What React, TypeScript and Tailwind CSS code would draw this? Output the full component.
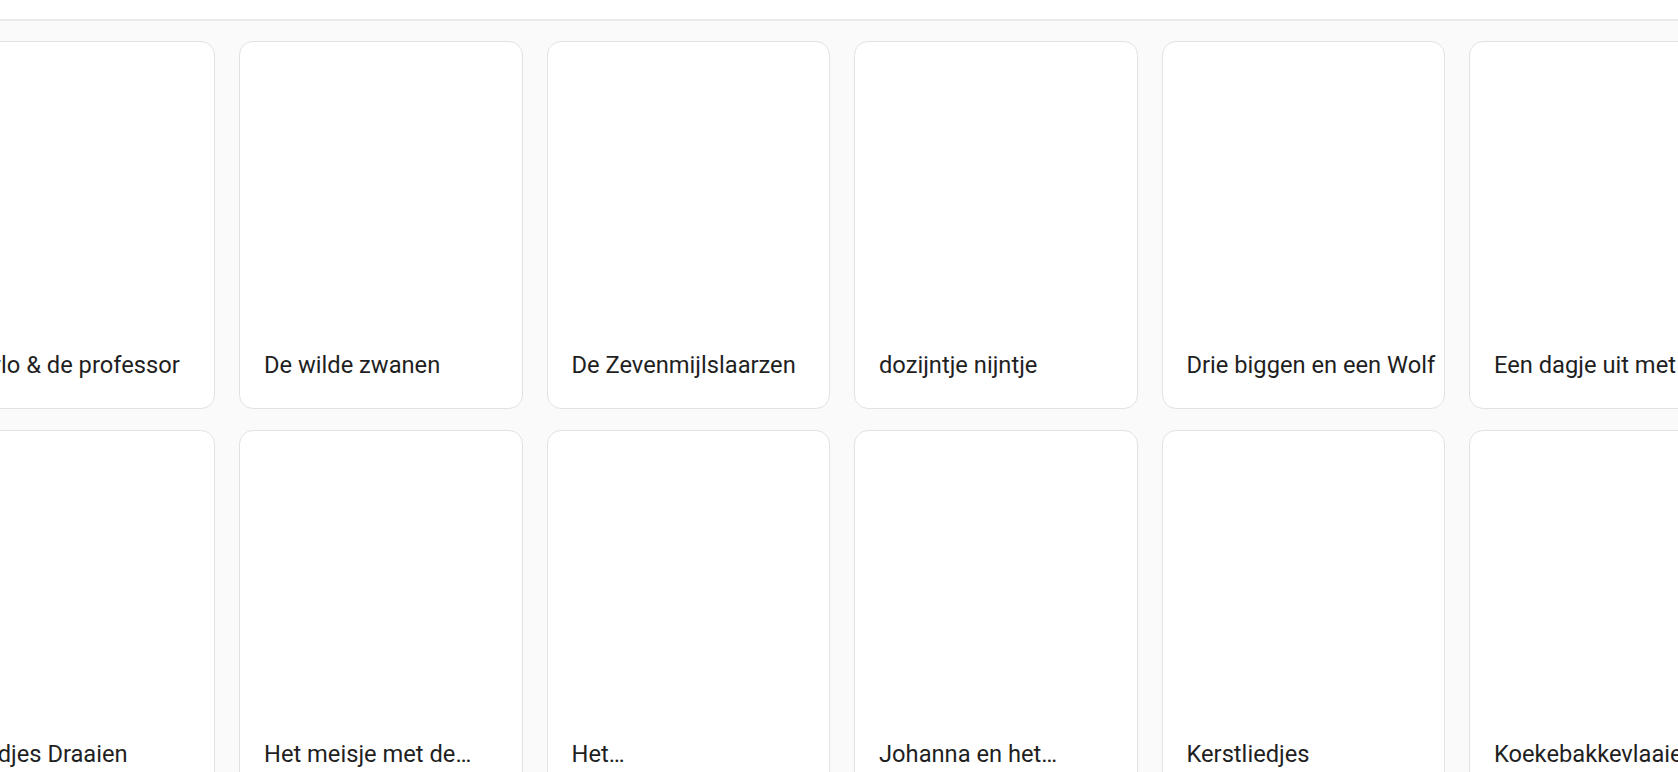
import React from "react";

const rows: string[][] = [
  ["Waylo & de professor", "De wilde zwanen", "De Zevenmijlslaarzen", "dozijntje nijntje", "Drie biggen en een Wolf", "Een dagje uit met nijntje"],
  ["Rondjes Draaien", "Het meisje met de…", "Het…", "Johanna en het…", "Kerstliedjes", "Koekebakkevlaaien"],
];

function Card({ title }: { title: string }) {
  return (
    <div className="w-[283.5px] h-[368px] shrink-0 rounded-[14px] border border-[#e2e2e2] bg-white flex flex-col justify-end px-6 pb-[29.5px] overflow-hidden">
      <div className="text-[23.7px] leading-[28px] text-[#1f1f1f] whitespace-nowrap">{title}</div>
    </div>
  );
}

export default function App() {
  return (
    <div
      className="w-full h-[772px] overflow-hidden bg-[#fafafa] flex flex-col"
      style={{ fontFamily: "Roboto, 'Noto Sans', sans-serif" }}
    >
      <div className="h-[21px] shrink-0 bg-white border-b-2 border-[#e9e9e9]" />
      <div className="flex flex-col gap-[21px] pt-[20px] ml-[-68.5px]">
        {rows.map((row, i) => (
          <div key={i} className="flex gap-6">
            {row.map((t) => (
              <Card key={t} title={t} />
            ))}
          </div>
        ))}
      </div>
    </div>
  );
}
